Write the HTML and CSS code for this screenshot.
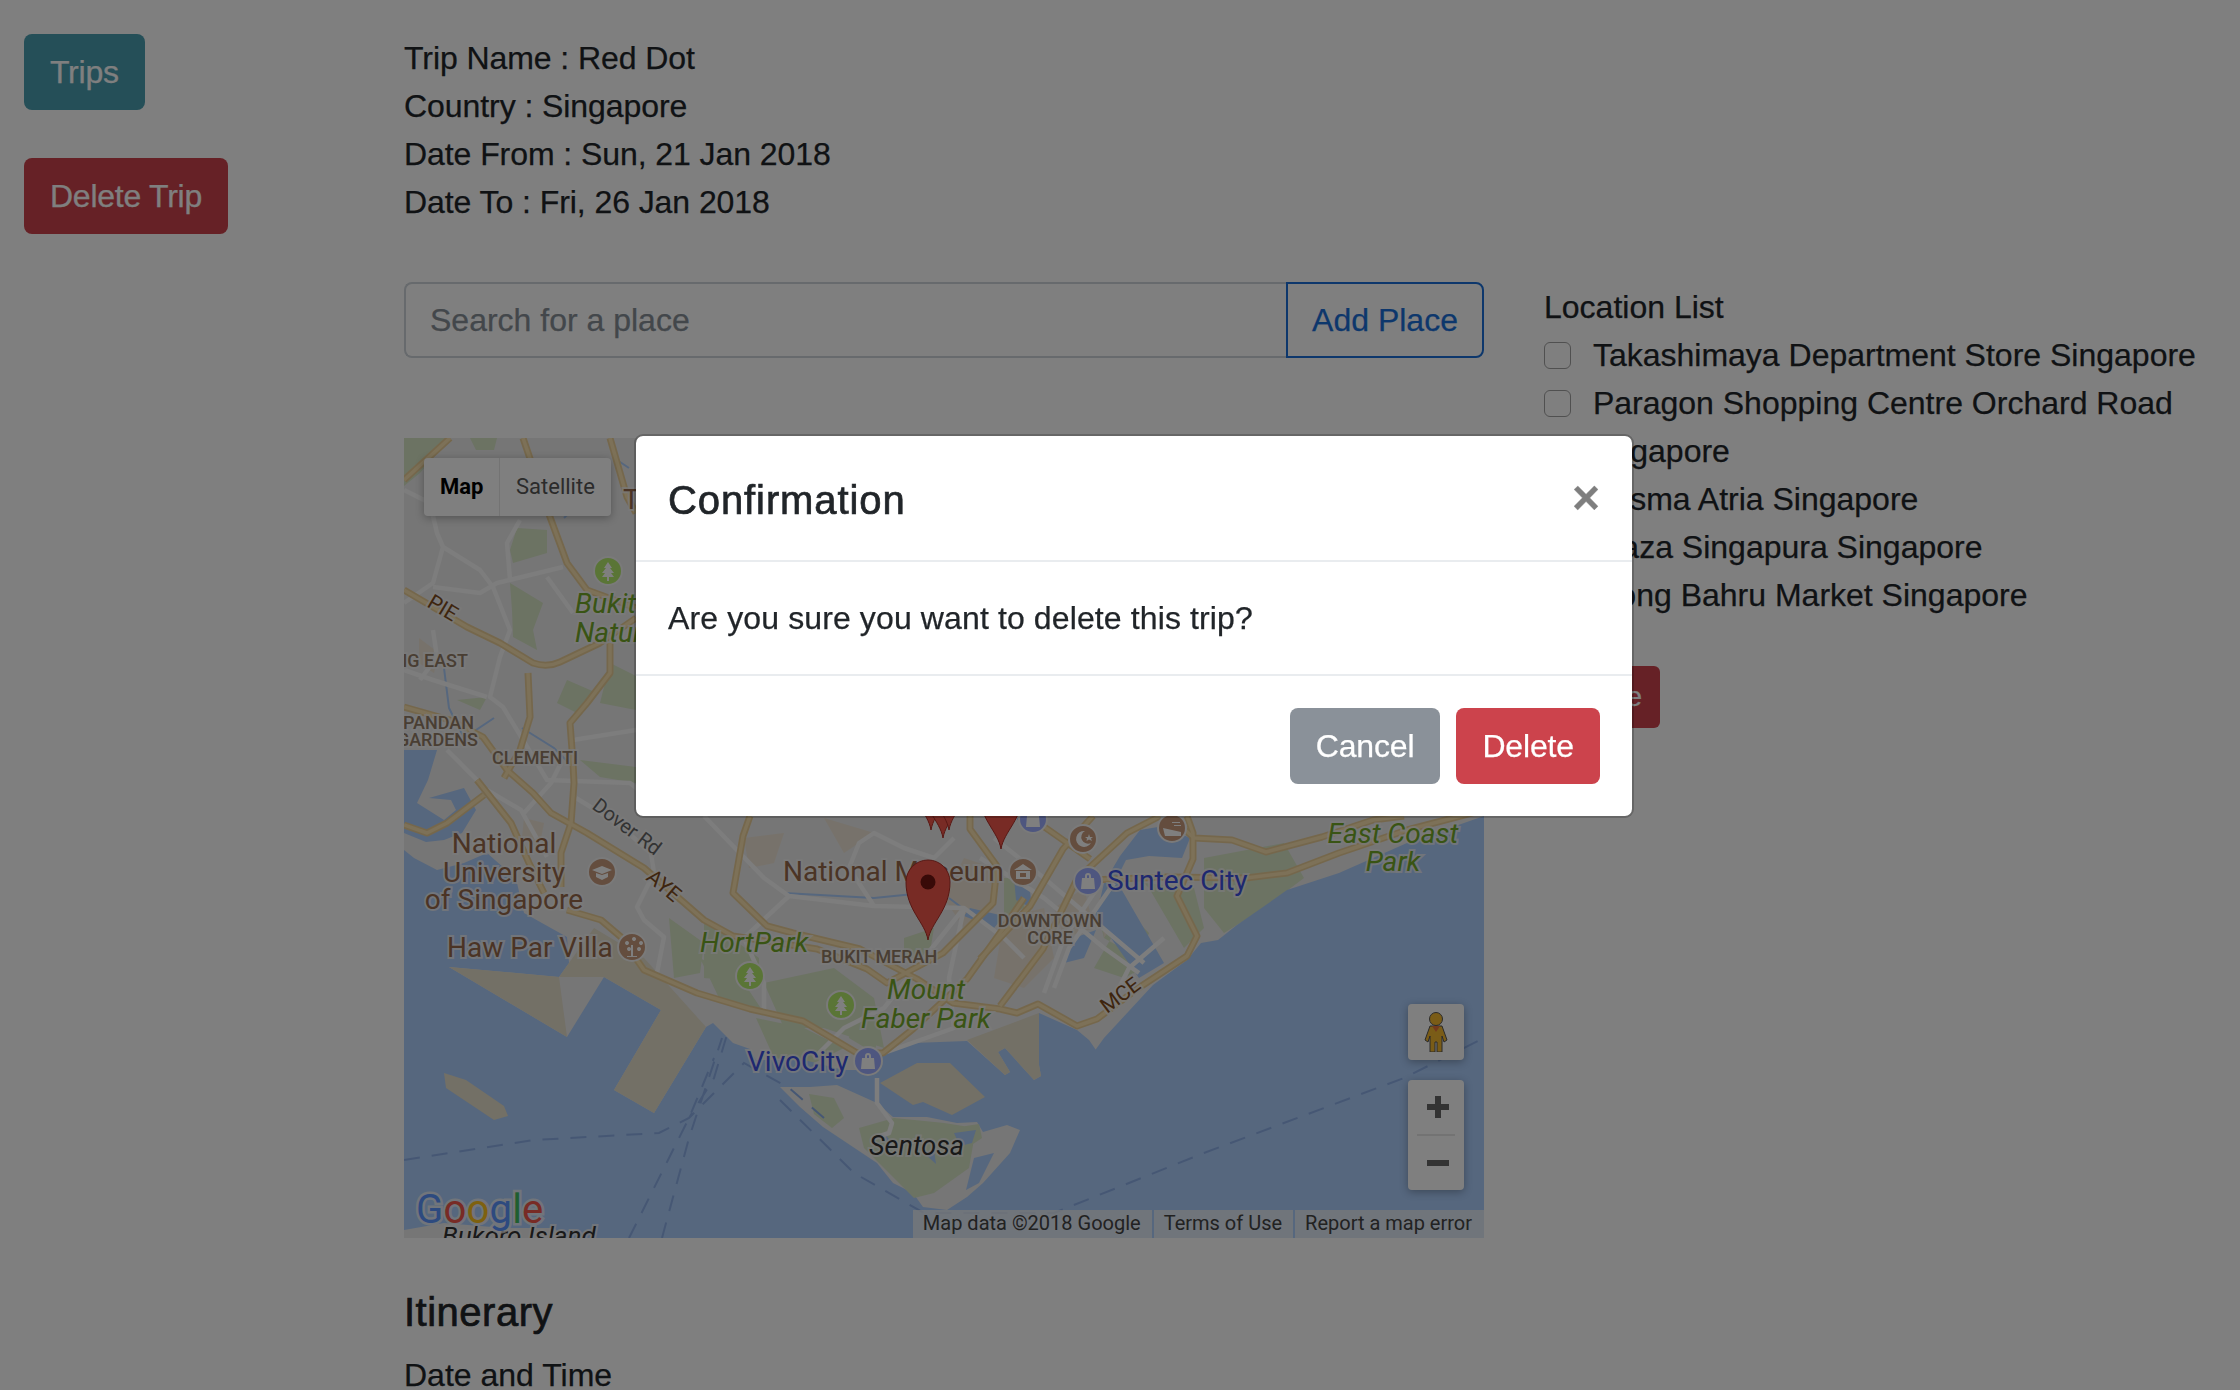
FILE: index.html
```html
<!DOCTYPE html>
<html>
<head>
	<meta charset="utf-8">
	<meta name="viewport" content="width=device-width, initial-scale=1">
	<title>Trip</title>
	<link rel="stylesheet" href="styles.css">
</head>
<body>

<div class="page">

	<div class="side">
		<button class="btn btn-info btn-tight">Trips</button>
		<button class="btn btn-danger btn-tight">Delete Trip</button>
	</div>

	<div class="main">
		<div class="trip-info">
			<div>Trip Name : Red Dot</div>
			<div>Country : Singapore</div>
			<div>Date From : Sun, 21 Jan 2018</div>
			<div>Date To : Fri, 26 Jan 2018</div>
		</div>

		<div class="search-row">
			<div class="input-group">
				<div class="search-input">Search for a place</div>
				<button class="btn btn-outline">Add Place</button>
			</div>
			<div class="locations">
				<div>Location List</div>
				<label class="check"><input type="checkbox">&nbsp;Takashimaya Department Store Singapore</label>
				<label class="check"><input type="checkbox">&nbsp;Paragon Shopping Centre Orchard Road Singapore</label>
				<label class="check"><input type="checkbox">&nbsp;Wisma Atria Singapore</label>
				<label class="check"><input type="checkbox">&nbsp;Plaza Singapura Singapore</label>
				<label class="check"><input type="checkbox">&nbsp;Tiong Bahru Market Singapore</label>
				<button class="btn btn-danger btn-sm">Delete</button>
			</div>
		</div>

		<div class="map">
			<svg class="map-art" viewBox="0 0 1080 800" width="1080" height="800">
				<defs>
					<path id="hw1" d="M0 152L29 169 63 189 96 205 129 225Q143 230 156 224L196 205 232 180"/>
					<path id="hw2" d="M124 235L126 279 116 312 100 340"/>
					<path id="hw3" d="M206 205V235L183 265 166 285 169 325 170 345 167 385 157 415 157 449"/>
					<path id="hw4" d="M0 269L46 282 79 299 103 332 129 355 147 375 183 395 240 430 277 462 300 482 329 498 413 511 463 531 483 545 539 515 563 491 589 465 593 428 566 391V378"/>
					<path id="hw5" d="M346 378L339 398 329 455 363 488 389 495 456 511 513 541 549 565 596 571 613 575 634 566 673 588 693 581 733 551 783 518 793 498 773 458 789 421V395L783 378"/>
					<path id="hw6" d="M687 442L763 439 842 440 883 435 935 415 1003 392 1080 372"/>
					<path id="hw7" d="M770 382L790 400 828 402 862 414 918 399 969 382 1000 378"/>
					<path id="hw8" d="M163 472L197 482 217 499 240 532 293 555 346 571 399 583 453 615H479L509 591 563 541 596 495 620 460"/>
					<path id="hw9" d="M0 387L23 395 43 385 80 357M73 342L107 385 125 425 140 455"/>
					<path id="hw10" d="M576 521L626 468 659 411 689 378M596 568L639 511 673 441 723 395 756 378M639 388L686 421"/>
					<path id="hw11" d="M46 0L0 42M206 0L223 59 232 75"/>
					<path id="hw12" d="M119 0L146 79 163 125 183 152 232 170"/>
					<g id="tree"><path d="M0-9L4-3H2L6 2H3L6 6H1V10H-1V6H-6L-3 2H-6L-2-3H-4Z"/></g>
					<g id="bag"><path d="M-6-3H6L7 8H-7ZM-3-3V-5A3 3 0 0 1 3-5V-3H1V-5A1 1 0 0 0-1-5V-3Z"/></g>
					<path id="pin" d="M0 0C-3-18-22-30-22-58A22 22 0 0 1 22-58C22-30 3-18 0 0Z"/>
				</defs>

				<rect class="land" width="1080" height="800"/>

				<!-- parks and urban tint -->
				<path class="green" d="M0 0H46L16 35 0 48ZM66 0L93 0 90 12 72 12ZM113 90L143 92 143 115 109 125 106 112ZM106 145L139 165 129 192 133 212 109 199 108 172ZM163 242L193 255 173 275 153 265ZM53 262L83 259 76 272ZM176 322L232 329V345L196 339ZM206 225L232 238V272L196 265Z"/>
				<path class="green" d="M265 480L300 505 296 535 270 540ZM300 480L355 520 355 545 300 540ZM296 520L340 545 360 575 315 560ZM360 545L430 530 470 560 480 610 420 590 380 590ZM352 580L400 590 440 610 410 625 370 620ZM450 560L480 580 470 615 445 600Z"/>
				<path class="green" d="M695 480L700 500 735 520 745 495 720 470ZM740 445L790 450 800 490 780 510 745 450ZM690 530L710 495 740 530 720 540ZM800 420L880 405 900 440 860 470 820 495 800 470ZM600 440L625 440 620 470 600 480ZM500 500L530 490 525 520 500 520Z"/>
				<path class="tan" d="M560 420L590 430 590 470 560 490 540 460ZM600 480L640 470 650 520 620 550 590 540ZM650 470L680 450 690 490 660 500ZM700 500L720 470 695 460ZM340 400L380 395 370 425 345 430ZM420 380L470 395 440 415ZM120 380L140 385 135 410 118 400ZM15 200L35 215 30 235 15 225Z"/>

				<!-- water -->
				<path class="water" d="M0 312L33 312 24 342 13 365 40 382 52 372 47 362 25 360 60 350 72 372 58 395 40 402 22 404 0 395ZM0 412L10 420 33 432 60 425 83 415 100 430 113 445 120 475 163 499 165 525 155 539 45 529 163 599 200 539 257 572 210 652 250 675 302 589 309 585 329 605 346 611 352 622 400 622 440 632 470 632 473 615 509 605 563 603 601 637 606 634 594 614 601 610 630 642 637 638 635 627V575L673 592 685 602 694 615 687 618 700 600 749 547 783 522 797 505 814 502 833 487 859 469 883 452 935 435 1003 405 1080 378V800H0Z"/>
				<path class="water" d="M696 462L700 445 716 418 736 392 760 388 786 400 778 420 745 418 722 422 712 442 760 525 735 540 700 490 690 480ZM612 380L640 378 625 395ZM610 440L625 445 628 470 612 462ZM566 470L600 478 590 490 560 478ZM670 500L692 492 680 520 660 525Z"/>
				<path class="stream" d="M380 455L470 460 520 455M545 460L565 475 590 480M118 290L150 310 170 330M40 230L45 270 60 300 90 280M210 20L225 30M175 65L160 80"/>

				<!-- port and islands -->
				<path class="port" d="M45 529L155 539 163 599Z"/>
				<path class="port" d="M155 539L200 539 257 572 210 652 250 675 302 589 240 520 190 490 165 525Z"/>
				<path class="port" d="M476 645L513 625H546L581 659 548 677 519 664 509 667Z"/>
				<path class="port" d="M563 602L635 575V627L637 638 630 642 601 610 594 614 606 634 601 637Z"/>
				<path class="port" d="M40 635L62 642 100 668 104 678 90 682 60 662 42 650Z"/>
				<path class="land" d="M376 649L406 649 433 647 473 665 489 679 523 679 553 685 573 684 579 694 603 687 616 692 606 715 579 745 563 759 543 772 519 769 509 755 489 745 473 725 449 709 419 689 396 669Z"/>
				<path class="green" d="M405 656L430 660 440 680 428 690 410 676ZM455 690L490 680 540 685 572 690 565 730 530 755 510 760 480 730 460 710ZM549 690L575 686 578 700 560 712Z"/>
				<path class="water" d="M550 695L572 692 568 705 556 708ZM570 720L590 715 575 745 562 752ZM520 715L530 712 532 726ZM480 695L488 705 484 712Z"/>
				<path class="land" d="M0 792L40 785 100 790 150 790 170 810H0Z"/>

				<!-- roads -->
				<g class="road">
					<path d="M0 52L26 65 33 95 39 109 76 132 89 149 106 192 96 219 86 259 99 269 119 302 143 342 226 345 247 362M0 165L29 145 39 109M29 149L76 155 93 145 159 129M116 82L103 105 106 142M143 139L169 175M29 192L33 219 16 242M0 232L29 242 83 259M169 302L232 292"/>
					<path d="M43 312L73 342M83 352L117 372 143 419M120 375L147 345 157 325M172 360L213 385 247 415 250 435 233 469 240 482 260 499 253 535"/>
					<path d="M300 378L360 440 385 458 470 468 560 470 600 500 620 520M385 458L340 500 360 545V575M470 468L445 430 455 405 470 395 500 410 530 420 550 400M560 470L545 540 550 590 480 615M560 470L480 570 440 590 410 620"/>
					<path d="M576 420L640 460 700 510 735 535M590 400L640 440 740 525M700 440L660 500 640 555M710 445L665 510 650 550M760 500L725 530 710 560"/>
					<path d="M473 640V665L488 685 485 695 470 700"/>
				</g>
				<g class="hw-edge"><use href="#hw1"/><use href="#hw2"/><use href="#hw3"/><use href="#hw4"/><use href="#hw5"/><use href="#hw6"/><use href="#hw7"/><use href="#hw8"/><use href="#hw9"/><use href="#hw10"/><use href="#hw11"/><use href="#hw12"/></g>
				<g class="hw"><use href="#hw1"/><use href="#hw2"/><use href="#hw3"/><use href="#hw4"/><use href="#hw5"/><use href="#hw6"/><use href="#hw7"/><use href="#hw8"/><use href="#hw9"/><use href="#hw10"/><use href="#hw11"/><use href="#hw12"/></g>

				<!-- ferry routes -->
				<path class="ferry" d="M0 722L130 702 255 695 285 680 310 640 325 590M225 800L285 680 310 620M258 800L285 700 318 600M420 680L385 650 340 625 285 680M376 662L450 735 520 775H650L800 715 1000 640 1080 600"/>

				<!-- place labels -->
				<text class="lb-area" x="64" y="229" text-anchor="end">JURONG EAST</text>
				<text class="lb-area" x="70" y="291" text-anchor="end">PANDAN</text>
				<text class="lb-area" x="74" y="308" text-anchor="end">GARDENS</text>
				<text class="lb-area" x="88" y="326">CLEMENTI</text>
				<text class="lb-area" x="417" y="525">BUKIT MERAH</text>
				<text class="lb-area" x="646" y="489" text-anchor="middle">DOWNTOWN</text>
				<text class="lb-area" x="646" y="506" text-anchor="middle">CORE</text>

				<text class="lb-hw" transform="translate(22 168) rotate(31)">PIE</text>
				<text class="lb-hw" transform="translate(241 441) rotate(40)">AYE</text>
				<text class="lb-hw" transform="translate(703 576) rotate(-37)">MCE</text>
				<text class="lb-rd" transform="translate(187 370) rotate(37)">Dover Rd</text>

				<text class="lb-place" x="219" y="71">Toa Payoh</text>
				<text class="lb-place" x="100" y="415" text-anchor="middle">National</text>
				<text class="lb-place" x="100" y="444" text-anchor="middle">University</text>
				<text class="lb-place" x="100" y="471" text-anchor="middle">of Singapore</text>
				<text class="lb-place" x="43" y="519">Haw Par Villa</text>
				<text class="lb-place" x="379" y="443">National Museum</text>

				<text class="lb-park" x="171" y="175">Bukit</text>
				<text class="lb-park" x="171" y="204">Nature</text>
				<text class="lb-park" x="296" y="514">HortPark</text>
				<text class="lb-park" x="522" y="561" text-anchor="middle">Mount</text>
				<text class="lb-park" x="522" y="590" text-anchor="middle">Faber Park</text>
				<text class="lb-park" x="989" y="405" text-anchor="middle">East Coast</text>
				<text class="lb-park" x="989" y="433" text-anchor="middle">Park</text>

				<text class="lb-shop" x="703" y="452">Suntec City</text>
				<text class="lb-shop" x="343" y="633">VivoCity</text>
				<text class="lb-isle" x="465" y="717">Sentosa</text>
				<text class="lb-isle lb-small" x="38" y="807">Bukoro Island</text>

				<!-- pois -->
				<g class="poi poi-green" transform="translate(204 133)"><circle r="14"/><use href="#tree"/></g>
				<g class="poi poi-green" transform="translate(346 538)"><circle r="14"/><use href="#tree"/></g>
				<g class="poi poi-green" transform="translate(437 567)"><circle r="14"/><use href="#tree"/></g>
				<g class="poi poi-brown" transform="translate(198 434)"><circle r="14"/><path d="M0-6L10-2 0 2-10-2ZM-6 1L0 3 6 1V5L0 8-6 5Z"/></g>
				<g class="poi poi-brown" transform="translate(228 509)"><circle r="14"/><path d="M-1-2H1V9H-1ZM-7-4A2 2 0 1 1-7-3.900ZM0-8A2 2 0 1 1 0-7.900ZM7-4A2 2 0 1 1 7-3.900ZM-5 2A2 2 0 1 1-5 2.100ZM5 2A2 2 0 1 1 5 2.100ZM-5 9H5V10H-5Z"/></g>
				<g class="poi poi-brown" transform="translate(619 434)"><circle r="14"/><path d="M0-8L9-2H-9ZM-7-1H7V7H-7ZM-3 1V5H3V1Z" fill-rule="evenodd"/></g>
				<g class="poi poi-brown" transform="translate(679 401)"><circle r="14"/><path d="M2-8A8 8 0 1 0 8 4 6.500 6.500 0 1 1 2-8Z"/><path d="M6-5L7-2H10L8-.5 9 2 6 .5 3.500 2 4-.5 2-2H5Z"/></g>
				<g class="poi poi-brown" transform="translate(768 390)"><circle r="14"/><path d="M-9 0L0 2 9 4V8H-7ZM0-6H8V-5H0ZM2-3H9V-2H2Z"/></g>
				<g class="poi poi-blue" transform="translate(629 381)"><circle r="14"/><use href="#bag"/></g>
				<g class="poi poi-blue" transform="translate(684 443)"><circle r="14"/><use href="#bag"/></g>
				<g class="poi poi-blue" transform="translate(464 623)"><circle r="14"/><use href="#bag"/></g>

				<!-- markers -->
				<use class="marker" href="#pin" x="527" y="392"/>
				<use class="marker" href="#pin" x="539" y="400"/>
				<use class="marker" href="#pin" x="545" y="392"/>
				<use class="marker" href="#pin" x="597" y="411"/>
				<use class="marker" href="#pin" x="524" y="502"/>
				<circle class="marker-dot" cx="524" cy="444" r="7.500"/>

				<!-- logo -->
				<text class="logo" x="12" y="785"><tspan class="lg-b">G</tspan><tspan class="lg-r">o</tspan><tspan class="lg-y">o</tspan><tspan class="lg-b">g</tspan><tspan class="lg-g">l</tspan><tspan class="lg-r">e</tspan></text>
			</svg>

			<div class="map-type">
				<div class="map-type-item map-type-on">Map</div>
				<div class="map-type-item">Satellite</div>
			</div>

			<div class="pegman">
				<svg viewBox="0 0 24 40" width="24" height="40">
					<circle cx="12" cy="7" r="6.500" class="peg"/>
					<path class="peg" d="M6 14H18L23 28 20 30 18 24V40H13V30H11V40H6V24L4 30 1 28Z"/>
					<path d="M8 14H16L12 20Z" fill="#e8743a"/>
				</svg>
			</div>

			<div class="zoom-box">
				<div class="zoom-btn"><svg viewBox="0 0 22 22" width="22" height="22"><path d="M8 0H14V8H22V14H14V22H8V14H0V8H8Z"/></svg></div>
				<div class="zoom-sep"></div>
				<div class="zoom-btn"><svg viewBox="0 0 22 6" width="22" height="6"><path d="M0 0H22V6H0Z"/></svg></div>
			</div>

			<div class="attrib">
				<div class="attrib-item">Map data ©2018 Google</div>
				<div class="attrib-item">Terms of Use</div>
				<div class="attrib-item">Report a map error</div>
			</div>
		</div>

		<h4 class="itin-title">Itinerary</h4>
		<div>Date and Time</div>
	</div>
</div>

<div class="backdrop"></div>

<div class="modal">
	<div class="modal-head">
		<div class="modal-title">Confirmation</div>
		<div class="close">×</div>
	</div>
	<div class="modal-body">Are you sure you want to delete this trip?</div>
	<div class="modal-foot">
		<button class="btn btn-secondary">Cancel</button>
		<button class="btn btn-danger">Delete</button>
	</div>
</div>

</body>
</html>
```

FILE: styles.css
```css
html, body {
  margin: 0;
  height: 100%;
  overflow: hidden;
}

body {
  font-family: "Liberation Sans", Arial, sans-serif;
  font-size: 32px;
  line-height: 48px;
  color: #212529;
  background-color: #fff;
  -webkit-text-stroke: 0.25px currentColor;
}

.page {
  display: flex;
}

.side {
  width: 404px;
  flex: none;
  box-sizing: border-box;
  padding: 34px 0 0 24px;
  display: flex;
  flex-direction: column;
  align-items: flex-start;
  gap: 48px;
}

.main {
  width: 1812px;
  padding-top: 34px;
}

.btn {
  font: inherit;
  padding: 12px 24px;
  border: 2px solid transparent;
  border-radius: 8px;
  color: #fff;
  background: none;
  -webkit-text-stroke: inherit;
  letter-spacing: -0.15px;
}

.btn-tight { letter-spacing: -0.25px; }

.btn-info { background-color: #4a9eb0; }
.btn-danger { background-color: #cc434c; }
.btn-secondary { background-color: #8a9199; }

.btn-outline {
  color: #1a6fd8;
  border-color: #1a6fd8;
  border-radius: 0 8px 8px 0;
  width: 198px;
  padding: 12px 0;
  letter-spacing: 0;
}

.btn-sm {
  font-size: 28px;
  line-height: 42px;
  padding: 8px 16px;
  border-radius: 6px;
  margin-top: 47px;
}

.trip-info {
  margin-bottom: 56px;
  letter-spacing: -0.07px;
}

.search-row {
  display: flex;
  gap: 60px;
  height: 156px;
}

.input-group {
  display: flex;
  width: 1080px;
  height: 76px;
  flex: none;
}

.search-input {
  flex: 1;
  border: 2px solid #ced4da;
  border-right: none;
  border-radius: 8px 0 0 8px;
  padding: 12px 24px;
  color: #868e96;
}

.locations {
  width: 670px;
  margin-top: 1px;
}

.check {
  display: block;
  position: relative;
  padding-left: 40px;
}

.check input {
  appearance: none;
  position: absolute;
  left: 0;
  top: 11px;
  width: 27px;
  height: 27px;
  margin: 0;
  box-sizing: border-box;
  background-color: #fff;
  border: 1px solid #a0a0a0;
  border-radius: 6px;
}

/* map */
.map {
  position: relative;
  width: 1080px;
  height: 800px;
  overflow: hidden;
  font-family: Roboto, sans-serif;
  -webkit-text-stroke: 0;
}

.map-art {
  display: block;
}

.land { fill: #ececec; }
.green { fill: #d8e6c6; }
.tan { fill: #efe5d6; }
.water { fill: #acceFc; }
.port { fill: #e6e0cc; }
.stream { fill: none; stroke: #acceFc; stroke-width: 2; }

.road { fill: none; stroke: #fafafa; stroke-width: 4.500; stroke-linejoin: round; }
.hw-edge { fill: none; stroke: #ebcf98; stroke-width: 7; stroke-linejoin: round; }
.hw { fill: none; stroke: #fae3b0; stroke-width: 3.500; stroke-linejoin: round; }
.ferry { fill: none; stroke: #8cafe8; stroke-width: 2; stroke-dasharray: 16 12; }

.map-art text {
  font-family: Roboto, sans-serif;
  stroke: #f4f4f4;
  stroke-width: 4px;
  stroke-opacity: 0.75;
  paint-order: stroke;
}

.lb-area { font-size: 18px; font-weight: 500; fill: #927c66; }
.lb-hw { font-size: 21px; fill: #7c4a1c; }
.lb-rd { font-size: 20px; fill: #666; }
.lb-place { font-size: 28px; fill: #96694a; }
.lb-park { font-size: 28px; font-style: italic; fill: #73a828; }
.lb-shop { font-size: 28px; fill: #3c50e0; }
.lb-isle { font-size: 27px; font-style: italic; fill: #333; }
.lb-small { font-size: 26px; }

.poi circle { stroke: #f4f4f4; stroke-width: 2; }
.poi path, .poi use { fill: #fff; }
.poi-green circle { fill: #b4ea6c; }
.poi-brown circle { fill: #c89a7c; }
.poi-blue circle { fill: #9cacff; }

.marker { fill: #f0564a; stroke: #b03028; stroke-width: 1; }
.marker-dot { fill: #701410; }

.map-art .logo { font-size: 40px; font-weight: 400; stroke-width: 5px; letter-spacing: 0.2px; }
.lg-b { fill: #5a94ff; }
.lg-r { fill: #f0564a; }
.lg-y { fill: #fdc21e; }
.lg-g { fill: #3fbc60; }

.map-type {
  position: absolute;
  left: 20px;
  top: 20px;
  display: flex;
  height: 58px;
  background-color: #fff;
  border-radius: 4px;
  box-shadow: 0 2px 8px rgba(0,0,0,.3);
  font-size: 22px;
  line-height: 58px;
  color: #565656;
}

.map-type-item {
  padding: 0 16px;
}

.map-type-on {
  width: 43px;
  font-weight: 700;
  color: #000;
  border-right: 1px solid #e6e6e6;
}

.pegman {
  position: absolute;
  left: 1004px;
  top: 566px;
  width: 56px;
  height: 56px;
  display: flex;
  justify-content: center;
  align-items: center;
  background-color: #fff;
  border-radius: 4px;
  box-shadow: 0 2px 8px rgba(0,0,0,.3);
}

.peg { fill: #f5b82e; stroke: #555; stroke-width: 1; }

.zoom-box {
  position: absolute;
  left: 1004px;
  top: 642px;
  width: 56px;
  height: 110px;
  background-color: #fff;
  border-radius: 4px;
  box-shadow: 0 2px 8px rgba(0,0,0,.3);
  display: flex;
  flex-direction: column;
  align-items: center;
}

.zoom-btn {
  flex: 1;
  display: flex;
  align-items: center;
  justify-content: center;
  fill: #666;
  padding-left: 3px;
}

.zoom-sep {
  width: 38px;
  height: 2px;
  background-color: #e6e6e6;
}

.attrib {
  position: absolute;
  right: 0;
  bottom: 0;
  display: flex;
  gap: 2px;
  height: 28px;
  font-size: 20px;
  line-height: 26px;
  color: #444;
}

.attrib-item {
  padding: 0 11px 0 10px;
  background-color: rgba(245,245,245,.72);
}

.attrib-item:last-child {
  padding-right: 12px;
}

.itin-title {
  margin: 44px 0 9px;
  font-size: 40px;
  line-height: 60px;
  font-weight: 400;
  -webkit-text-stroke: 0.7px currentColor;
  letter-spacing: 0.5px;
}

/* modal */
.backdrop {
  position: fixed;
  left: 0;
  top: 0;
  right: 0;
  bottom: 0;
  background-color: rgba(0,0,0,.5);
}

.modal {
  position: fixed;
  left: 634px;
  top: 434px;
  width: 1000px;
  box-sizing: border-box;
  background-color: #fff;
  border: 2px solid rgba(0,0,0,.2);
  background-clip: padding-box;
  border-radius: 9px;
}

.modal-head {
  display: flex;
  justify-content: space-between;
  padding: 34px 32px 30px;
  border-bottom: 2px solid #e9ecef;
}

.modal-title {
  font-size: 40px;
  line-height: 60px;
  -webkit-text-stroke: 0.7px currentColor;
  letter-spacing: 0.9px;
}

.close {
  font-size: 48px;
  line-height: 48px;
  margin-top: 4px;
  font-weight: 700;
  color: #000;
  opacity: .5;
}

.modal-body {
  padding: 32px;
  letter-spacing: 0.12px;
}

.modal-foot {
  display: flex;
  justify-content: flex-end;
  gap: 16px;
  padding: 32px;
  border-top: 2px solid #e9ecef;
}
```
